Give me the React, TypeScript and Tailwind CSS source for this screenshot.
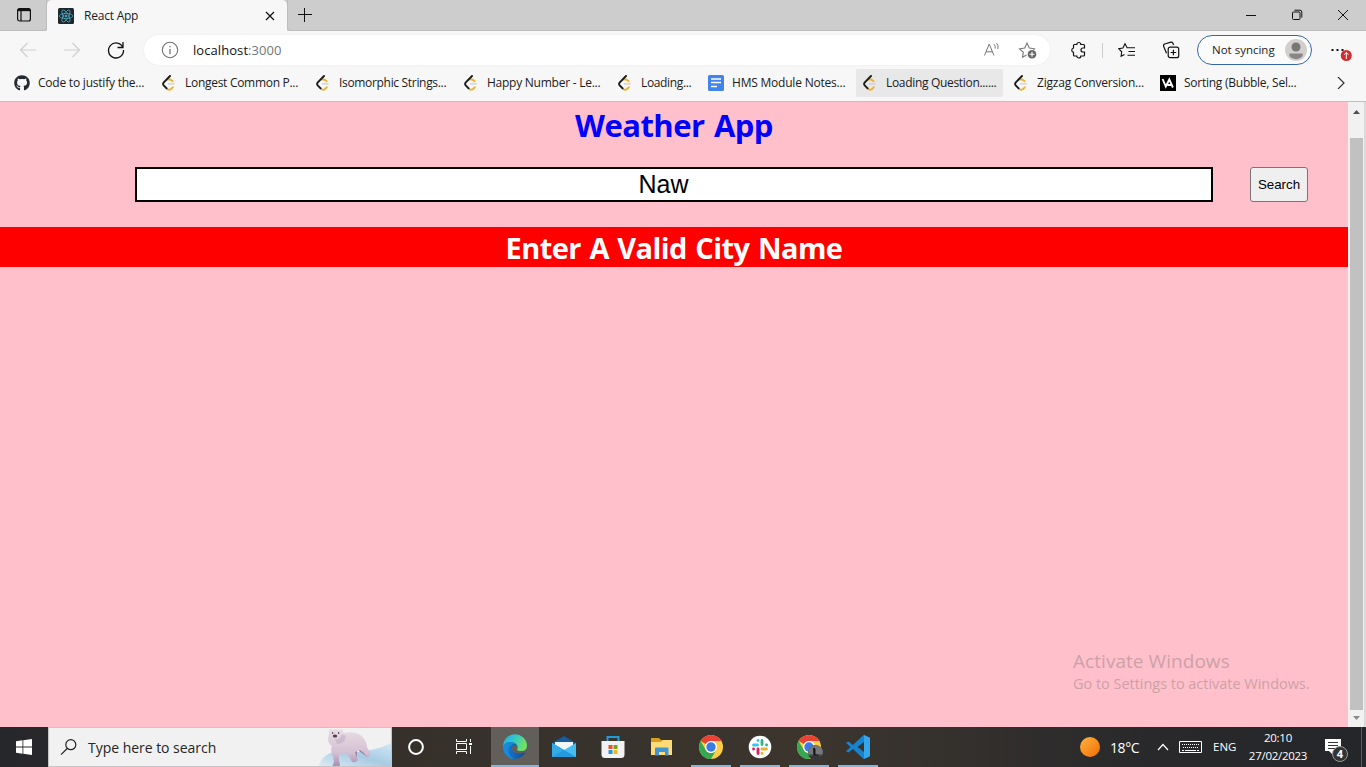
import React from "react";
import { FaGithub } from "react-icons/fa";

function LeetCode() {
  return (
    <svg width="16" height="16" viewBox="0 0 16 16" fill="none" strokeLinecap="round">
      <path d="M7.500 8.800h5.700" stroke="#cfcbd0" strokeWidth="1.300" />
      <path d="M6.400 4.600Q9 3.600 11.500 6.200M5.400 13.100l1 1.100q2.800 1.800 5.400-1.900" stroke="#f0b02c" strokeWidth="1.900" />
      <path d="M9 1 2.800 7.400Q1.500 8.900 2.700 10.300L5.600 13.300" stroke="#1b1b1b" strokeWidth="1.900" />
    </svg>
  );
}

function Docs() {
  return (
    <svg width="16" height="16" viewBox="0 0 16 16">
      <rect width="16" height="16" rx="1.5" fill="#4283ee" />
      <path d="M3 4h10M3 7.5h10M3 11.5h6" stroke="#fff" strokeWidth="1.6" />
    </svg>
  );
}

function VA() {
  return (
    <svg width="16" height="16" viewBox="0 0 16 16" fill="none" stroke="#fff" strokeWidth="1.9">
      <rect width="16" height="16" fill="#000" stroke="none" />
      <path d="M2.600 4 5.800 11.500 9.300 4.500l3.600 8M7.500 10h4" />
    </svg>
  );
}

function ReactLogo() {
  return (
    <svg width="16" height="16" viewBox="0 0 16 16" fill="none" stroke="#4aa3b9" strokeWidth=".8">
      <rect width="16" height="16" rx="1.500" fill="#20262d" stroke="none" />
      <ellipse cx="8" cy="8" rx="6.8" ry="2.6" />
      <ellipse cx="8" cy="8" rx="6.8" ry="2.6" transform="rotate(60 8 8)" />
      <ellipse cx="8" cy="8" rx="6.8" ry="2.6" transform="rotate(120 8 8)" />
      <circle cx="8" cy="8" r="1" fill="#58c4dc" />
    </svg>
  );
}

function TitleBar() {
  return (
    <div className="flex h-[31px] shrink-0 bg-[#cdcdcd]">
      <div className="flex w-[47px] items-center rounded-br-[4px] border-b border-r border-[#bdbdbd] pl-[16px]">
        <svg width="16" height="16" viewBox="0 0 16 16" fill="none" stroke="#111" strokeWidth="1.2">
          <rect x="1.6" y="1.6" width="12.8" height="12.4" rx="2" />
          <path d="M1.6 3.1h12.8M5 4v10" />
          <path d="M2 2.9h12" strokeWidth="2.5" />
        </svg>
      </div>
      <div className="flex w-[240px] items-center rounded-t-[5px] bg-[#f7f7f7] pl-[11px]">
        <ReactLogo />
        <span className="w-[191px] pl-[10px] text-[12px] tracking-[-0.22px]">React App</span>
        <svg width="10" height="10" viewBox="0 0 10 10" stroke="#111" strokeWidth="1.2">
          <path d="m1 1 8 8M9 1 1 9" />
        </svg>
      </div>
      <div className="flex flex-1 items-center rounded-bl-[4px] border-b border-l border-[#bdbdbd] pl-[10px]">
        <svg width="14" height="14" viewBox="0 0 14 14" stroke="#111" className="-mt-px">
          <path d="M6.500 0v14M0 6.500h14" />
        </svg>
        <div className="ml-auto flex items-center pr-[17px]">
          <svg width="10" height="10" viewBox="0 0 10 10" stroke="#111"><path d="M0 5.5h10" /></svg>
          <svg width="12" height="12" viewBox="0 0 12 12" fill="none" stroke="#111" className="ml-[35px]">
            <rect x="1.5" y="3" width="7.5" height="7.5" rx="1" />
            <path d="M3.5 1.2H9q1.8 0 1.8 1.8v5.6" />
          </svg>
          <svg width="12" height="12" viewBox="0 0 12 12" stroke="#111" className="ml-[34px]"><path d="m1 1 10 10M11 1 1 11" /></svg>
        </div>
      </div>
    </div>
  );
}

function Toolbar() {
  return (
    <div className="flex h-[38px] shrink-0 items-center">
      <svg width="106" height="20" viewBox="0 0 106 20" fill="none" stroke="#cfcfcf" strokeWidth="1.2">
        <path d="M36 10H20.5m7-7-7 7 7 7M64 10h15.500m-7-7 7 7-7 7" />
      </svg>
      <svg width="20" height="20" viewBox="0 0 20 20" fill="none" stroke="#111" strokeWidth="1.3">
        <path d="M16.900 7.500A7.500 7.500 0 1 0 17.500 10M17 2v5.500h-5.500" />
      </svg>
      <div className="ml-[18px] flex h-[30px] w-[906px] items-center rounded-full bg-white pl-[17px] shadow-[0_0_2px_#e5e5e5]">
        <svg width="18" height="18" viewBox="0 0 18 18" fill="none" stroke="#717171" strokeWidth="1.1">
          <circle cx="9" cy="9" r="7.700" />
          <path d="M9 8v5M9 5v1.300" strokeWidth="1.300" />
        </svg>
        <span className="pl-[14px] pt-px text-[13px] text-[#111] tracking-[0.07px]">localhost<span className="text-[#757575]">:3000</span></span>
        <svg width="18" height="18" viewBox="0 0 18 18" fill="none" stroke="#777" strokeWidth="1" className="ml-auto">
          <path d="m1.500 14.500 4.700-11.500L11 14.500M3 10.800h6.400M11 3.200q1.700 1.800 1.200 4.300M13.500 2q2.500 2.500 1.300 6" />
        </svg>
        <svg width="20" height="20" viewBox="0 0 20 20" fill="none" stroke="#777" strokeWidth="1.100" className="ml-[17px] mr-[12px]">
          <path d="m8.500 15-4 2.300.8-5L1.700 8.800l5-.8L9 3l2.300 5 5.200.8-1 1" />
          <circle cx="14" cy="14.300" r="4.300" fill="#666" stroke="none" />
          <path d="M14 11.800v5M11.500 14.300h5" stroke="#fff" />
        </svg>
      </div>
      <svg width="18" height="18" viewBox="0 0 18 18" fill="none" stroke="#111" strokeWidth="1.200" className="ml-[19px]">
        <path d="M5.500 3.500h2.300a2 2 0 0 1 4 0h2.700q1 0 1 1V7H14a2 2 0 0 0 0 4h1.500v3q0 1-1 1h-2.700a2 2 0 0 1-4 0H5.500q-1 0-1-1v-2.700a2.200 2.200 0 0 1 0-4.300V4.500q0-1 1-1Z" />
      </svg>
      <div className="ml-[15px] h-[15px] w-px bg-[#cdcdcd]" />
      <svg width="18" height="18" viewBox="0 0 18 18" fill="none" stroke="#111" strokeWidth="1.100" className="ml-[15px]">
        <path d="m6.500 13.500-3.400 1.800.6-4.500L.7 7.600l4.200-.5L7 2.700l2.100 4.100H17M10.500 10.500H17M9.500 14.200H17" />
      </svg>
      <svg width="18" height="18" viewBox="0 0 18 18" fill="none" stroke="#111" strokeWidth="1.200" className="ml-[26px]">
        <rect x="6.200" y="6.200" width="10.500" height="10.500" rx="2" />
        <path d="M11.400 8.700v5.600M8.600 11.500h5.600M4.500 12.200 1.700 5.500Q1 3.700 2.700 3L8.900 1.200q1.300-.3 1.900.8l.8 2" />
      </svg>
      <div className="ml-[17px] flex h-[30px] w-[115px] items-center rounded-full border border-[#3566ac] bg-[#fbfbfb] pl-[14px]">
        <span className="w-[73px] whitespace-nowrap text-[11.500px]">Not syncing</span>
        <svg width="22" height="22" viewBox="0 0 22 22">
          <circle cx="11" cy="11" r="11" fill="#d2d0ce" />
          <circle cx="11" cy="8" r="4.500" fill="#797775" />
          <path d="M4.500 14.500h13q1 2-1.500 4a9 9 0 0 1-10 0q-2.500-2-1.500-4Z" fill="#898785" />
        </svg>
      </div>
      <svg width="24" height="24" viewBox="0 0 24 24" className="ml-[18px]">
        <path d="M1.500 12h2M6.500 12h2M11.500 12h2" stroke="#111" strokeWidth="2" />
        <circle cx="16.300" cy="17.500" r="5.500" fill="#d42c2c" />
        <path d="M16.300 21v-6.500m-2.200 2.200 2.200-2.200 2.200 2.200" stroke="#fff" fill="none" />
      </svg>
    </div>
  );
}

function Bookmark({ icon, label, className }: { icon: React.ReactNode; label: string; className: string }) {
  return (
    <div className={"flex h-[28px] shrink-0 items-center gap-2 rounded-[2px] pl-[6px] " + className}>
      <span className="shrink-0">{icon}</span>
      <span className="whitespace-nowrap text-[12px]">{label}</span>
    </div>
  );
}

function Bookmarks() {
  return (
    <div className="flex h-[33px] shrink-0 gap-1 border-b border-[#c3bfc0] pl-2">
      <Bookmark className="w-[143px] tracking-[-0.22px]" icon={<FaGithub size={16} color="#24292f" />} label="Code to justify the..." />
      <Bookmark className="w-[150px] tracking-[-0.29px]" icon={<LeetCode />} label="Longest Common P..." />
      <Bookmark className="w-[144px] tracking-[-0.32px]" icon={<LeetCode />} label="Isomorphic Strings..." />
      <Bookmark className="w-[150px] tracking-[-0.25px]" icon={<LeetCode />} label="Happy Number - Le..." />
      <Bookmark className="w-[87px] tracking-[-0.35px]" icon={<LeetCode />} label="Loading..." />
      <Bookmark className="w-[150px] tracking-[-0.21px]" icon={<Docs />} label="HMS Module Notes..." />
      <Bookmark className="w-[147px] bg-[#e8e8e8] tracking-[-0.32px]" icon={<LeetCode />} label="Loading Question......" />
      <Bookmark className="w-[143px] tracking-[-0.2px]" icon={<LeetCode />} label="Zigzag Conversion..." />
      <Bookmark className="w-[150px] tracking-[-0.25px]" icon={<VA />} label="Sorting (Bubble, Sel..." />
      <svg width="8" height="12" viewBox="0 0 8 12" fill="none" stroke="#333" strokeWidth="1.200" className="ml-[29px] mt-[8px]">
        <path d="m1 0 6 6-6 6" />
      </svg>
    </div>
  );
}

function WeatherPage() {
  return (
    <div className="relative flex-1 bg-[#ffc0cb]">
      <h1 className="mt-[4px] h-[40px] text-center text-[31px] font-bold leading-[38px] tracking-[-0.55px] text-[#0000ff] [word-spacing:2px]">Weather App</h1>
      <div className="mt-[21px] flex h-[35px] pl-[135px]">
        <div className="flex h-[35px] w-[1078px] items-center justify-center border-2 border-black bg-white pr-[21px] font-['Liberation_Sans',sans-serif] text-[25px] text-black">Naw</div>
        <button className="ml-[37px] w-[58px] rounded-[3px] border border-[#767676] bg-[#efefef] font-['Liberation_Sans',sans-serif] text-[13.333px] text-black">Search</button>
      </div>
      <h2 className="mt-[25px] h-[40px] bg-[#ff0000] text-center text-[29px] font-bold leading-[41px] tracking-[-0.57px] text-white [word-spacing:1.5px]">Enter A Valid City Name</h2>
      <div className="absolute left-[1073px] top-[547px] whitespace-nowrap text-[#cda0a7]">
        <div className="text-[19px] leading-[24px] tracking-[0.05px]">Activate Windows</div>
        <div className="text-[14.500px] leading-[22px] tracking-[-0.03px]">Go to Settings to activate Windows.</div>
      </div>
    </div>
  );
}

function Scrollbar() {
  return (
    <div className="flex w-[18px] flex-col border-r-2 border-[#dadada] bg-[#f1f1f1] px-[2px]">
      <svg width="13" height="36" viewBox="0 0 13 36"><path d="m3 12 3.500-4 3.500 4Z" fill="#505050" /></svg>
      <div className="h-[572px] w-[13px] bg-[#c1c1c1]" />
      <svg width="13" height="17" viewBox="0 0 13 17"><path d="m3 6 3.500 4L10 6Z" fill="#8a8a8a" /></svg>
    </div>
  );
}

function Bear() {
  return (
    <svg width="74" height="38" viewBox="0 0 74 38" className="absolute bottom-0 right-0">
      <defs>
        <linearGradient id="ice" x1="0" x2="1" y1="1" y2="0"><stop stopColor="#dcebf5" /><stop offset=".5" stopColor="#a9cbe3" /><stop offset="1" stopColor="#d3e8f6" /></linearGradient>
        <linearGradient id="fur" x1="0" x2="0" y1="0" y2="1"><stop stopColor="#eadde5" /><stop offset=".6" stopColor="#d3c0d2" /><stop offset="1" stopColor="#9c87a9" /></linearGradient>
      </defs>
      <path d="M2 38q2-10 14-14h24q18-1 34-9v23Z" fill="url(#ice)" />
      <path d="M43 17q8 2 10 9l-3 3-8-6M31 20l5 10 4 1v-10" fill="#9b84a4" />
      <path d="M12 5q-1-4 2-4l2 1q3-2 6 0l2-1q3 0 2 4 10-2 16 1 7 4 8 13l3 6q1 3-2 4-3-1-4-4l-4-3-5 2 1 3 2 5-2 2h-4l-2-4-3-5q-4 2-8 1v6l1 5-2 3q-5 2-6-1l2-5-1-6q-3-5-1-10-4-2-4-7Z" fill="url(#fur)" />
      <path d="M25 6q-1 5-7 6l2 4q8 0 9-8Z" fill="#c3adc5" opacity=".6" />
      <path d="M15 5h1.200M21 5h1.200" stroke="#3c3346" strokeWidth="1.400" />
      <ellipse cx="18" cy="8" rx="2.200" ry="1.500" fill="#4b3f50" />
    </svg>
  );
}

function Chrome() {
  return (
    <g>
      <circle cx="12" cy="12" r="12" fill="#ffce44" />
      <path d="M12 12 1.600 6A12 12 0 0 1 22.400 6H12Z" fill="#ea4335" />
      <path d="M1.600 6A12 12 0 0 0 12 24l5.200-9A6 6 0 0 1 6.800 15Z" fill="#34a853" />
      <circle cx="12" cy="12" r="6" fill="#fff" />
      <circle cx="12" cy="12" r="4.700" fill="#3b7be8" />
    </g>
  );
}

function Task({ children, open, active }: { children: React.ReactNode; open?: boolean; active?: boolean }) {
  return (
    <div className={"flex h-[40px] shrink-0 flex-col items-center " + (active ? "w-[48px] bg-[#625e59]" : "w-[49px] pl-px")}>
      <svg width="24" height="38" viewBox="0 -8 24 38" overflow="visible">{children}</svg>
      {open && <div className={"h-[2px] shrink-0 bg-[#76b9ed] " + (active ? "w-[48px]" : "w-[40px]")} />}
    </div>
  );
}

function Taskbar() {
  return (
    <div className="flex h-[40px] shrink-0 bg-[linear-gradient(90deg,#26272b_0%,#35302a_29%,#3b352e_60%,#29292b_84%,#242629_100%)] text-white">
      <div className="flex w-[48px] items-center pl-[16px]">
        <svg width="16" height="16" viewBox="0 0 16 16" fill="#fff"><path d="m0 2.200 6.500-.9v6.300H0ZM7.300 1.200 16 0v7.600H7.300ZM0 8.400h6.500v6.300L0 13.800ZM7.300 8.400H16V16l-8.700-1.200Z" /></svg>
      </div>
      <div className="relative flex w-[344px] items-center border border-[#c5c5c7] bg-[#f1f1f1] pl-[11px] text-[#252525]">
        <svg width="18" height="18" viewBox="0 0 18 18" fill="none" stroke="#222" strokeWidth="1.200"><circle cx="10.800" cy="6.700" r="5" /><path d="M7.200 10.500 1 16.700" /></svg>
        <span className="pl-[10px] text-[14px] tracking-[-0.03px]">Type here to search</span>
        <Bear />
      </div>
      <div className="flex w-[99px] items-center pl-[15px]">
        <svg width="18" height="18" viewBox="0 0 18 18" fill="none" stroke="#fff" strokeWidth="2"><circle cx="9" cy="9" r="6.900" /></svg>
        <svg width="18" height="18" viewBox="0 0 18 18" fill="none" stroke="#fff" className="ml-[30px]"><path d="M1.500 1v2.500h10V1M1.500 16v-2.500h10V16M1.500 5.500h10v6h-10ZM15.500 1v3M15.500 8v8" /><path d="M14 5h3v2h-3Z" fill="#fff" stroke="none" /></svg>
      </div>
      <div className="flex">
        <Task open active>
          <defs>
            <linearGradient id="edgeTop" x1="0" x2="1" y1="0" y2=".4"><stop stopColor="#25a9e6" /><stop offset=".5" stopColor="#32c8c9" /><stop offset="1" stopColor="#6de264" /></linearGradient>
            <linearGradient id="edgeLow" x1="0" x2="1"><stop stopColor="#1880d8" /><stop offset="1" stopColor="#0f4c98" /></linearGradient>
          </defs>
          <path d="M0 12A12 12 0 0 1 24 10.500q0 5.500-6 5.500-4 0-4-2 1.500-1.500 0-3.500-4-6-14 1.500Z" fill="url(#edgeTop)" />
          <path d="M0 12.500Q1.500 6.800 8 7q5 .2 6.300 4.200-5-2.200-5.300 2.300Q9 17.500 15 18.500q4 .3 6.500-1 1.500-.3.500 1A12 12 0 0 1 0 12.500Z" fill="url(#edgeLow)" />
          <path d="M0 12.500Q1.500 7 8 7q3 0 5 2-6-.5-7.700 5.500Q4.700 20 11 24 1.500 23 0 12.500Z" fill="#168bdc" />
        </Task>
        <Task>
          <path d="M0 8 12 1l12 7v14H0Z" fill="#145b9f" /><path d="M3 7h18v8H3Z" fill="#f2f5f7" />
          <path d="m0 8 12 7 12-7v14H0Z" fill="#43bdf2" /><path d="M0 8v14h24L12 15Z" fill="#2499df" /><path d="M0 22 12 15 0 8Z" fill="#32aae8" />
        </Task>
        <Task>
          <path d="M6.500 7V2h11v5" fill="none" stroke="#249ad5" strokeWidth="2" />
          <path d="M.5 6h23v13.500q0 3.500-3.500 3.500H4Q.500 23 .5 19.500Z" fill="#f2f2f2" />
          <path d="M7.500 10h4v4h-4Z" fill="#e95326" /><path d="M12.500 10h4v4h-4Z" fill="#76a51d" /><path d="M7.500 15h4v4h-4Z" fill="#2199d8" /><path d="M12.500 15h4v4h-4Z" fill="#efb620" />
        </Task>
        <Task>
          <path d="M1 3h8l2 2h11v4H1Z" fill="#d79e20" /><path d="M1 7h10l2-2h9v15H1Z" fill="#ffdb78" />
          <path d="M5 20.500v-7q0-1 1-1h11.500q1 0 1 1v7h-3.500v-3.500H9v3.500Z" fill="#3f95d5" />
        </Task>
        <Task open><Chrome /></Task>
        <Task open>
          <circle cx="12" cy="12" r="11.300" fill="#fff" />
          <g fill="none" strokeWidth="2.800" strokeLinecap="round">
            <path d="M5.500 10h4M10 5.500h.1" stroke="#36c5f0" /><path d="M14 5.500v4M18.500 10h.1" stroke="#2eb67d" />
            <path d="M14 14h4.500M14 18.500h.1" stroke="#ecb22e" /><path d="M10 14v4.500M5.500 14h.1" stroke="#e01e5a" />
          </g>
        </Task>
        <Task open>
          <Chrome />
          <circle cx="18.500" cy="17.500" r="7.500" fill="#5b5c60" />
          <path d="M11.500 15.500a7.500 7.500 0 0 1 14-.5v4H11.500Z" fill="#77787a" />
          <path d="M16 13.500 17.500 12.500l1 2v5h3v2h-5Z" fill="#16181b" />
          <path d="M11.500 20.500h14a7.500 7.500 0 0 1-14 0Z" fill="#37383b" />
        </Task>
        <Task open>
          <path d="m17.500 0 6 2.800v18.400l-6 2.800L7 14l-4.500 3.500L0 16.200 4.500 12 0 7.800l2.500-1.300L7 10ZM18 7l-6.500 5 6.500 5Z" fill="#1684ce" fillRule="evenodd" />
          <path d="m18 0 6 2.800v18.400L18 24Z" fill="#35a5ec" />
        </Task>
      </div>
      <div className="ml-auto flex w-[286px] items-center">
        <div className="h-[20px] w-[20px] shrink-0 rounded-full bg-[linear-gradient(135deg,#fdb43f,#f36c05)]" />
        <span className="w-[46px] shrink-0 pl-[10px] pt-px text-[14px] tracking-[-0.4px]">18°C</span>
        <svg width="12" height="8" viewBox="0 0 12 8" fill="none" stroke="#fff" strokeWidth="1.200" className="ml-[11px] shrink-0"><path d="m1 7 5-5.500L11 7" /></svg>
        <svg width="24" height="14" viewBox="0 0 24 14" fill="none" stroke="#fff" className="ml-[10px] shrink-0"><path d="M.5 1.500h22v11H.5Z" /><path d="M3 4.500h17M4 7.500h16" strokeDasharray="1 1" /><path d="M3 10.500h2m1 0h11m1 0h2" /></svg>
        <span className="w-[44px] shrink-0 pl-[10px] text-[11.500px]">ENG</span>
        <div className="w-[62px] shrink-0 whitespace-nowrap text-center text-[11.500px] leading-[18px] tracking-[-0.27px]"><div>20:10</div><div>27/02/2023</div></div>
        <div className="relative ml-[15px] h-[30px] w-[28px] shrink-0">
          <svg width="18" height="18" viewBox="0 0 18 18" className="mt-[6px]"><path d="M1 1h16v12H9v4l-4-4H1Z" fill="#fff" /><path d="M4 4.500h10M4 7.500h10M4 10.500h7" stroke="#333" /></svg>
          <div className="absolute left-[8px] top-[14px] flex h-[16px] w-[16px] items-center justify-center rounded-full border border-[#999] bg-[#333] text-[11px] font-bold">4</div>
        </div>
        <div className="ml-auto mr-[4px] h-[40px] w-px bg-[#5a5a5c]" />
      </div>
    </div>
  );
}

export default function App() {
  return (
    <div className="flex h-[767px] w-[1366px] flex-col overflow-hidden bg-[#f7f7f7] font-['Open_Sans','Noto_Sans',sans-serif] text-[#1b1b1b]">
      <TitleBar />
      <Toolbar />
      <Bookmarks />
      <div className="flex min-h-0 flex-1"><WeatherPage /><Scrollbar /></div>
      <Taskbar />
    </div>
  );
}
